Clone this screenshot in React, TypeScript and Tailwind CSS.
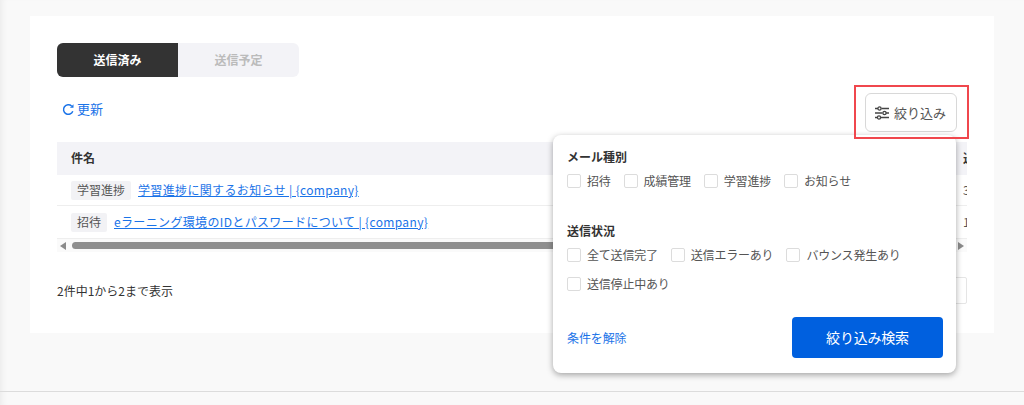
const FONT = "font-['Noto_Sans_CJK_JP','Noto_Sans',sans-serif]";

const MAIL_TYPES = ["招待", "成績管理", "学習進捗", "お知らせ"];
const SEND_STATES = ["全て送信完了", "送信エラーあり", "バウンス発生あり", "送信停止中あり"];

const ROWS = [
  { tag: "学習進捗", title: "学習進捗に関するお知らせ | {company}", num: "3", height: "h-[31px]" },
  { tag: "招待", title: "eラーニング環境のIDとパスワードについて | {company}", num: "1", height: "h-[33px]" },
];

function FilterIcon() {
  return (
    <svg width="16" height="16" viewBox="0 0 16 16" fill="none" stroke="#444" strokeWidth="1.3">
      <path d="M1 3.5h3M7.500 3.500h7.500M1 8h7.500M12 8h3M1 12.500h2.500M7 12.500h8" />
      <circle cx="5.500" cy="3.500" r="1.600" />
      <circle cx="10.500" cy="8" r="1.600" />
      <circle cx="5" cy="12.500" r="1.600" />
    </svg>
  );
}

function RefreshIcon() {
  return (
    <svg width="13" height="13" viewBox="0 0 13 13" fill="none" stroke="#1a73e8" strokeWidth="1.5">
      <path d="M10.800 8.300A4.800 4.800 0 1 1 9.600 3" />
      <path d="M11.500 1.200v3.600H7.900z" fill="#1a73e8" stroke="none" />
    </svg>
  );
}

function Check({ label }: { label: string }) {
  return (
    <label className="flex items-center gap-[6px] text-[12px] leading-[18px] tracking-[-0.2px] text-[#555]">
      <span className="w-[14px] h-[14px] rounded-[2px] border border-[#dcdcdc] bg-white" />
      {label}
    </label>
  );
}

function FilterPanel() {
  return (
    <div className="absolute left-[553px] top-[135px] w-[403px] h-[238px] bg-white rounded-[8px] shadow-[0_2px_6px_rgba(0,0,0,0.35)] pl-[14px] pr-[13px] pt-[13px]">
      <p className="text-[12px] leading-[18px] font-bold text-[#333]">メール種別</p>
      <div className="flex gap-x-[13px] mt-[6px]">
        {MAIL_TYPES.map((t) => (
          <Check key={t} label={t} />
        ))}
      </div>
      <p className="text-[12px] leading-[18px] font-bold text-[#333] mt-[32px]">送信状況</p>
      <div className="flex flex-wrap gap-x-[13px] gap-y-[11px] mt-[6px]">
        {SEND_STATES.map((t) => (
          <Check key={t} label={t} />
        ))}
      </div>
      <div className="flex items-center justify-between mt-[24px]">
        <a className="text-[12px] tracking-[-0.1px] text-[#1a73e8]">条件を解除</a>
        <button className="w-[151px] h-[41px] rounded-[4px] bg-[#0060df] text-white text-[14px] tracking-[-0.2px]">絞り込み検索</button>
      </div>
    </div>
  );
}

export default function App() {
  return (
    <div className={`relative w-[1024px] h-[405px] overflow-hidden bg-[#f9f9f9] shadow-[inset_6px_0_6px_-4px_rgba(0,0,0,0.06)] ${FONT}`}>
      <div className="ml-[30px] mt-[16px] w-[964px] h-[317px] bg-white px-[27px] pt-[27px]">
        <div className="flex w-[242px] h-[34px] rounded-[6px] bg-[#f3f3f7] text-[12px] font-bold overflow-hidden">
          <div className="flex-1 flex items-center justify-center bg-[#333] text-white">送信済み</div>
          <div className="flex-1 flex items-center justify-center text-[#bbb]">送信予定</div>
        </div>

        <div className="flex items-start justify-between mt-[16px] h-[39px] pr-[10px]">
          <a className="flex items-center gap-[2px] pl-[5px] mt-[7px] text-[13px] leading-[18px] text-[#1a73e8]">
            <RefreshIcon />
            更新
          </a>
          <button className="flex items-center gap-[4px] w-[92px] h-[39px] pl-[8px] rounded-[6px] border border-[#d8d8d8] text-[13px] text-[#555]">
            <FilterIcon />
            絞り込み
          </button>
        </div>

        <div className="mt-[10px] w-[910px] overflow-hidden">
          <div className="h-[33px] flex items-center bg-[#f3f3f7] pl-[14px] pb-[1px] text-[12px] font-bold text-[#333] justify-between">
            <span>件名</span>
            <span className="w-[4px] overflow-hidden">送</span>
          </div>
          {ROWS.map((r) => (
            <div key={r.tag} className={`${r.height} flex items-center pl-[14px] border-b border-[#eee] justify-between`}>
              <div className="flex items-center gap-[7px]">
                <span className="px-[6px] h-[19px] flex items-center bg-[#f2f2f5] rounded-[2px] text-[12px] text-[#555]">{r.tag}</span>
                <a className="text-[12px] tracking-[0.35px] text-[#1a73e8] underline">{r.title}</a>
              </div>
              <span className="w-[4px] overflow-hidden text-[12px] text-[#555]">{r.num}</span>
            </div>
          ))}
          <div className="h-[13px] flex items-center bg-[#fafafa] gap-[6px] px-[3px]">
            <span className="w-0 h-0 border-y-[4px] border-y-transparent border-r-[6px] border-r-[#8a8a8a]" />
            <span className="flex-1 h-[7px] rounded-full bg-[#8f8f8f]" />
            <span className="w-0 h-0 border-y-[4px] border-y-transparent border-l-[6px] border-l-[#8a8a8a]" />
          </div>
        </div>

        <div className="flex items-center justify-between mt-[25px] w-[910px]">
          <p className="text-[12px] text-[#333]">2件中1から2まで表示</p>
          <div className="w-[30px] h-[27px] border border-[#e5e5e5] rounded-r-[2px]" />
        </div>
      </div>

      <div className="mt-[58px] h-[14px] border-t border-[#dcdcdc]" />

      <FilterPanel />
      <div className="absolute left-[854px] top-[85px] w-[115px] h-[54px] border-2 border-[#f0474d]" />
    </div>
  );
}
